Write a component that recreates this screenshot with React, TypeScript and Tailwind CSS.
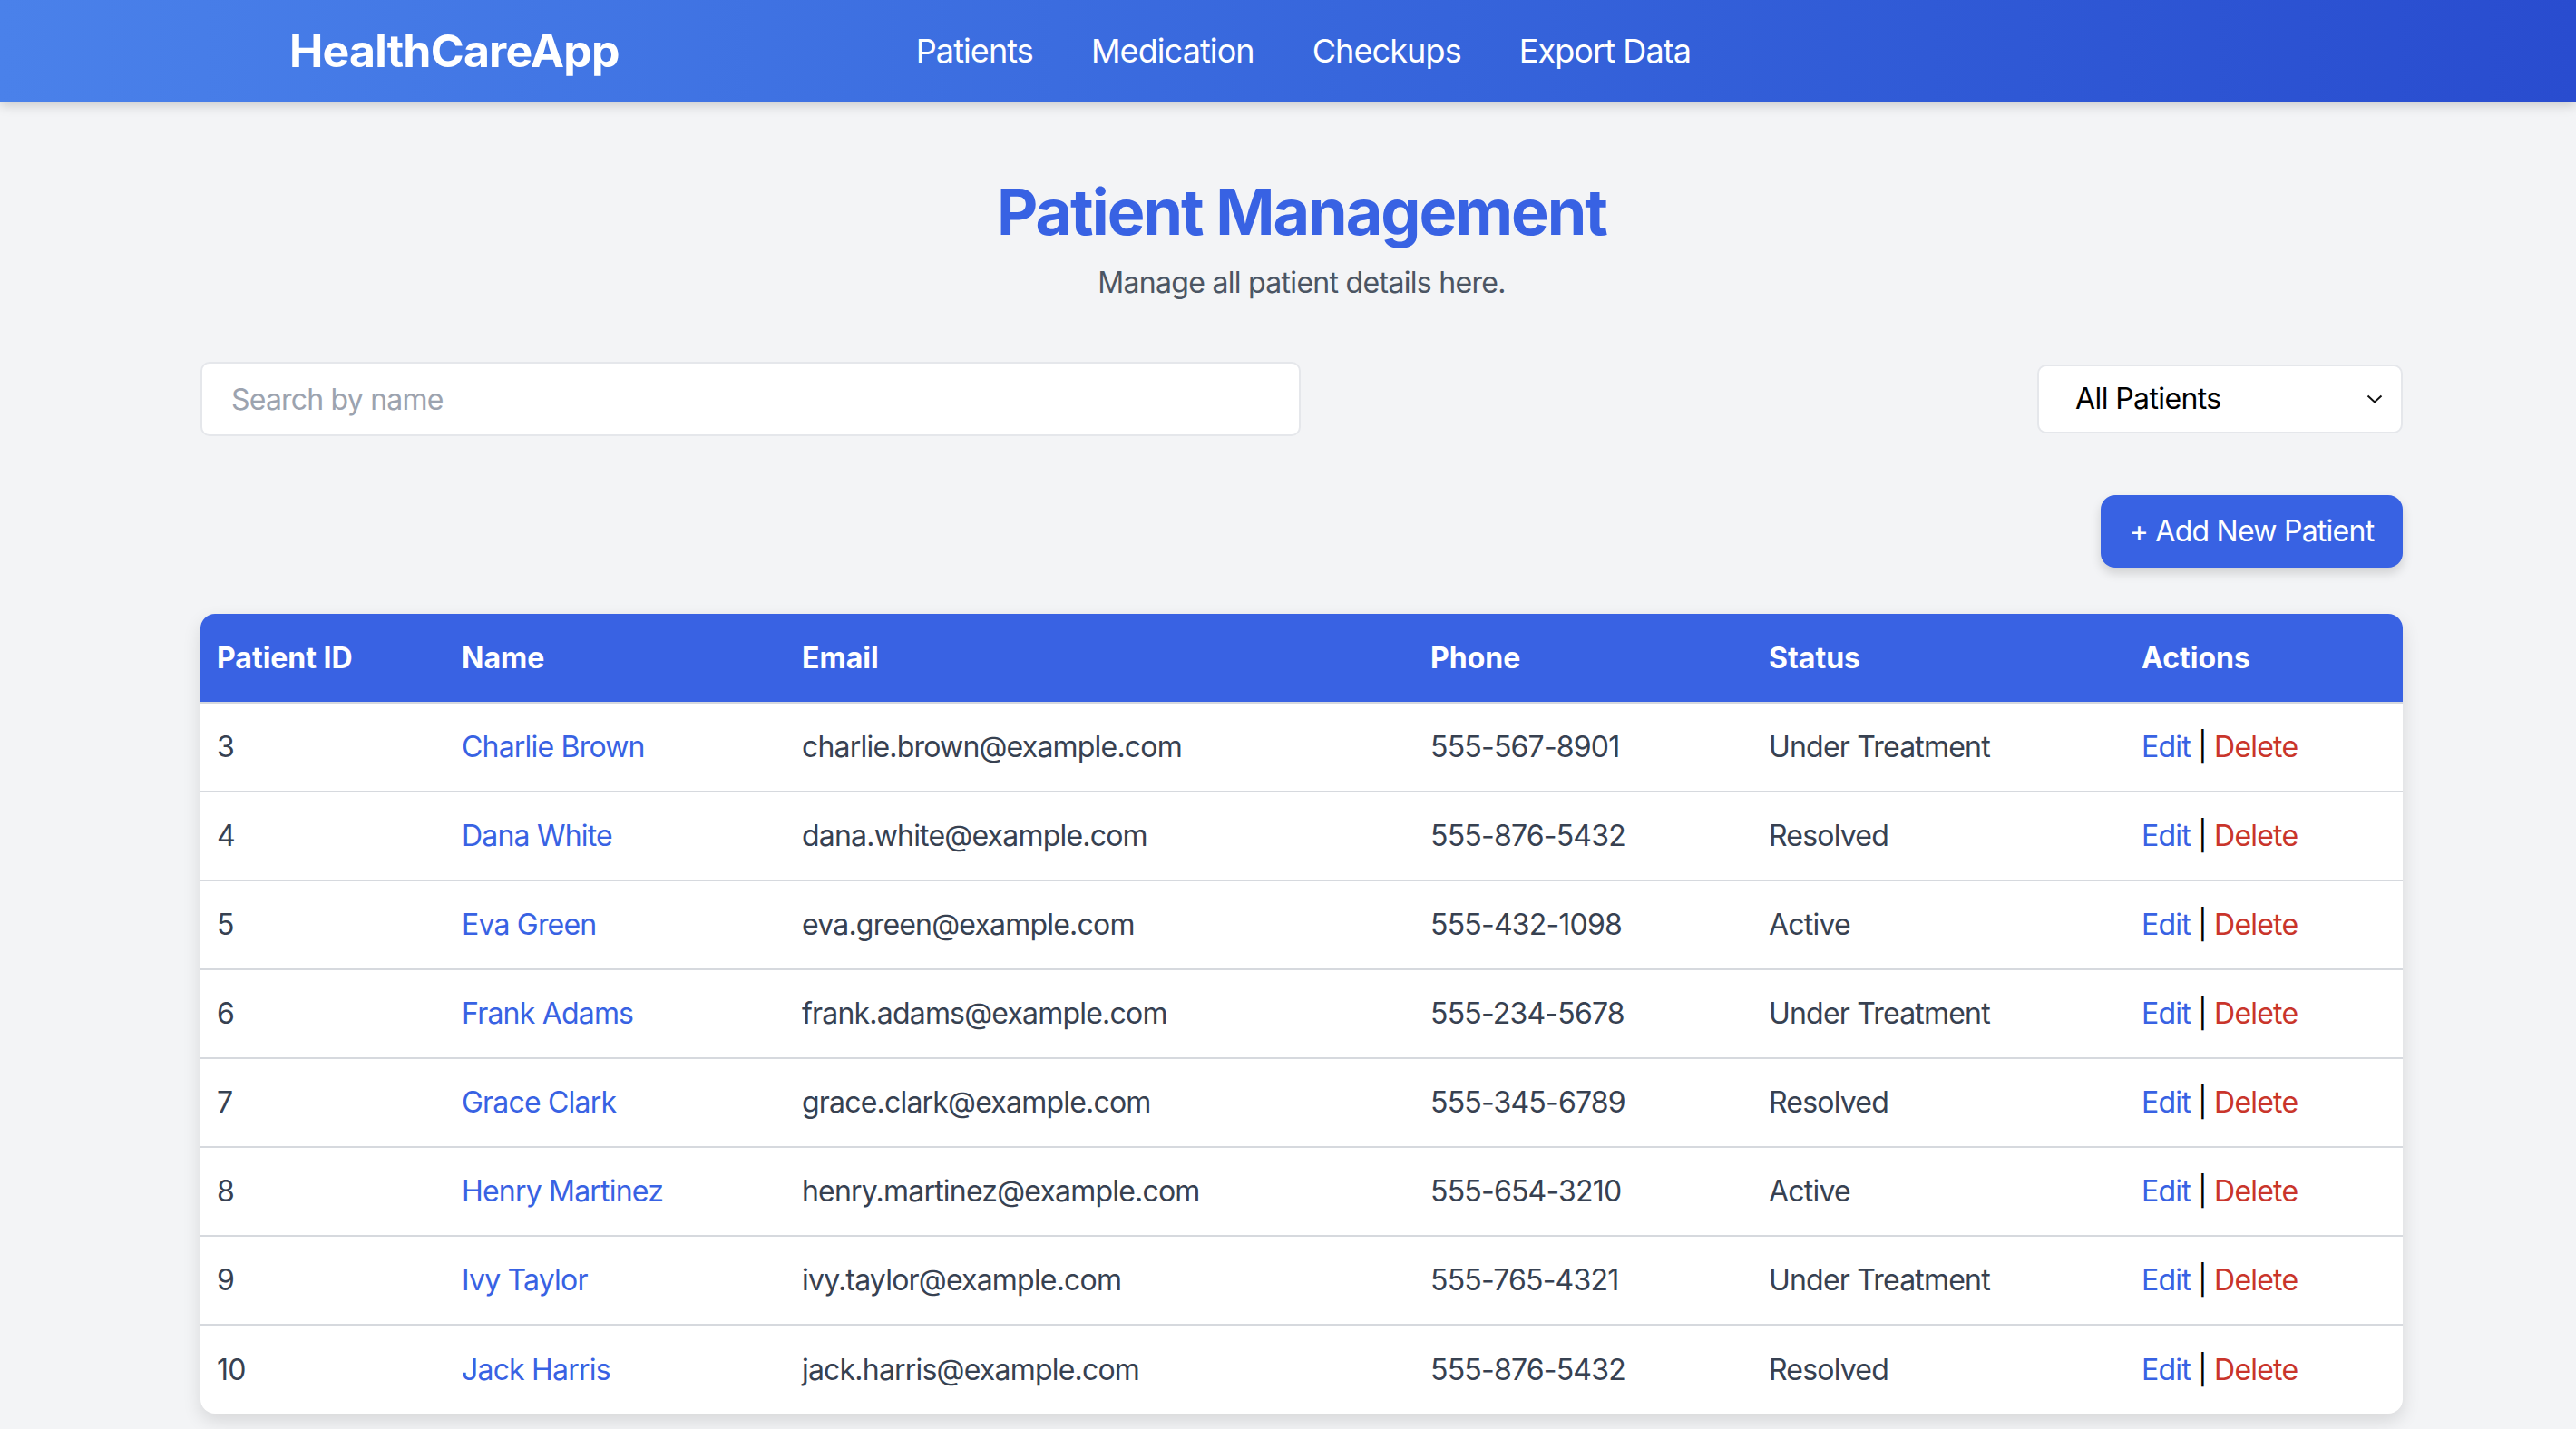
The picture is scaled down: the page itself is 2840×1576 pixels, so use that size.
import React from 'react'

const patients = [
  { id: 3, name: 'Charlie Brown', email: 'charlie.brown@example.com', phone: '555-567-8901', status: 'Under Treatment' },
  { id: 4, name: 'Dana White', email: 'dana.white@example.com', phone: '555-876-5432', status: 'Resolved' },
  { id: 5, name: 'Eva Green', email: 'eva.green@example.com', phone: '555-432-1098', status: 'Active' },
  { id: 6, name: 'Frank Adams', email: 'frank.adams@example.com', phone: '555-234-5678', status: 'Under Treatment' },
  { id: 7, name: 'Grace Clark', email: 'grace.clark@example.com', phone: '555-345-6789', status: 'Resolved' },
  { id: 8, name: 'Henry Martinez', email: 'henry.martinez@example.com', phone: '555-654-3210', status: 'Active' },
  { id: 9, name: 'Ivy Taylor', email: 'ivy.taylor@example.com', phone: '555-765-4321', status: 'Under Treatment' },
  { id: 10, name: 'Jack Harris', email: 'jack.harris@example.com', phone: '555-876-5432', status: 'Resolved' },
]

const font = { fontFamily: 'Inter, "Noto Sans", sans-serif' }

function Navbar() {
  return (
    <nav className="h-[112px] bg-gradient-to-r from-[#4a81ea] to-[#294ccf] shadow-[0_4px_12px_rgba(0,0,0,0.18)] flex items-center relative z-10">
      <div className="pl-[319px] flex items-center">
        <a href="#" className="text-[50px] font-bold text-white">
          HealthCareApp
        </a>
        <ul className="flex gap-[64px] ml-[327px] text-[36px] text-white tracking-[-0.9px]">
          <li><a href="#">Patients</a></li>
          <li><a href="#">Medication</a></li>
          <li><a href="#">Checkups</a></li>
          <li><a href="#">Export Data</a></li>
        </ul>
      </div>
    </nav>
  )
}

export default function App() {
  return (
    <div className="min-h-screen bg-[#f3f4f6] tracking-[-0.8px]" style={font}>
      <Navbar />
      <main className="pl-[221px] pr-[191px] pt-[82px]">
        <div className="text-center mb-[63px]">
          <h1 className="text-[70px] leading-[80px] font-bold text-[#3862e3] tracking-[-2px]">Patient Management</h1>
          <p className="mt-[14px] text-[32px] leading-[48px] text-[#4b5563] tracking-[-0.7px]">Manage all patient details here.</p>
        </div>

        <div className="flex items-center justify-between mb-[65px]">
          <input
            type="text"
            placeholder="Search by name"
            className="w-[1213px] h-[82px] px-[32px] text-[32px] bg-white border-2 border-[#e5e7eb] rounded-[10px] placeholder:text-[#9ca3af] outline-none tracking-[-0.8px]"
          />
          <div className="relative w-[403px] h-[76px] bg-white border-2 border-[#e5e7eb] rounded-[10px] flex items-center pl-[40px] pr-[20px]">
            <span className="text-[32px] text-black flex-1 tracking-[-0.6px]">All Patients</span>
            <svg width="18" height="10" viewBox="0 0 18 10" fill="none" stroke="#111" strokeWidth="2">
              <path d="M1.5 1.5 L9 8.5 L16.5 1.5" />
            </svg>
          </div>
        </div>

        <div className="flex justify-end mb-[51px]">
          <button className="w-[333px] h-[80px] bg-[#3862e3] text-white text-[32px] rounded-[16px] shadow-[0_6px_12px_rgba(0,0,0,0.15)] tracking-[-0.75px]">
            + Add New Patient
          </button>
        </div>

        <div className="bg-white rounded-[16px] shadow-[0_8px_20px_rgba(0,0,0,0.12)] overflow-hidden">
          <table className="w-full text-left text-[32px] border-collapse table-fixed">
            <colgroup>
              <col className="w-[270px]" />
              <col className="w-[375px]" />
              <col className="w-[693px]" />
              <col className="w-[373px]" />
              <col className="w-[411px]" />
              <col className="w-[306px]" />
            </colgroup>
            <thead className="bg-[#3962e3] text-white tracking-normal">
              <tr className="h-[98px]">
                <th className="pl-[18px] font-bold">Patient ID</th>
                <th className="pl-[18px] font-bold">Name</th>
                <th className="pl-[18px] font-bold">Email</th>
                <th className="pl-[18px] font-bold">Phone</th>
                <th className="pl-[18px] font-bold">Status</th>
                <th className="pl-[18px] font-bold">Actions</th>
              </tr>
            </thead>
            <tbody className="text-[#374151] tracking-[-0.8px]">
              {patients.map((p, i) => (
                <tr key={p.id} className={`h-[98px] ${i < patients.length - 1 ? 'border-b-2 border-[#d6d9de]' : ''} border-t-2 border-t-[#d6d9de]`}>
                  <td className="pl-[18px]">{p.id}</td>
                  <td className="pl-[18px] text-[#3862e3]">{p.name}</td>
                  <td className="pl-[18px]">{p.email}</td>
                  <td className="pl-[18px]">{p.phone}</td>
                  <td className="pl-[18px]">{p.status}</td>
                  <td className="pl-[18px]">
                    <span className="text-[#3862e3]">Edit</span>
                    <span className="text-black"> | </span>
                    <span className="text-[#c9352b]">Delete</span>
                  </td>
                </tr>
              ))}
            </tbody>
          </table>
        </div>
      </main>
    </div>
  )
}
